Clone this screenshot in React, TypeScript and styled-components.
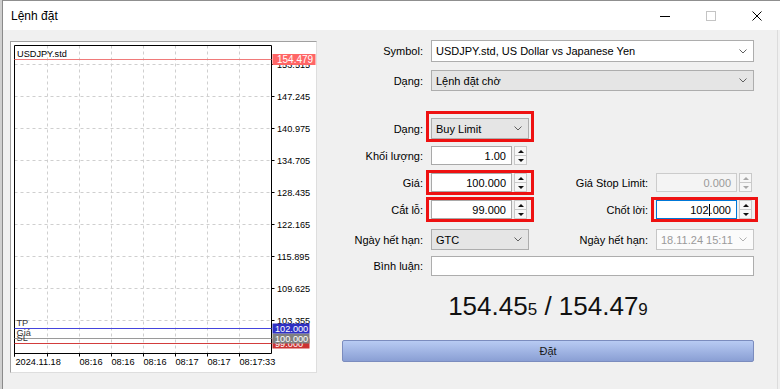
import React from 'react';
import styled, { createGlobalStyle } from 'styled-components';

const GlobalStyle = createGlobalStyle`
  html, body {
    margin: 0;
    padding: 0;
  }
  body {
    background: #cfcfcf;
    font-family: "Liberation Sans", Arial, sans-serif;
  }
`;

const Window = styled.div`
  width: 778px;
  height: 389px;
  margin-left: 2px;
  border-left: 1px solid #8a8a8a;
  box-sizing: border-box;
  display: flex;
  flex-direction: column;
  background: #f0f0f0;
  overflow: hidden;
`;

const TitleBar = styled.div`
  height: 30px;
  flex: none;
  box-sizing: border-box;
  border-top: 1px solid #8f8f8f;
  background: #fff;
  display: flex;
  align-items: center;
`;

const Title = styled.div`
  flex: 1;
  padding-left: 8px;
  font-size: 12px;
  color: #000;
`;

const CaptionButton = styled.div`
  width: 46px;
  height: 29px;
  display: flex;
  align-items: center;
  justify-content: center;
`;

const Body = styled.div`
  flex: 1;
  display: flex;
  align-items: flex-start;
  padding: 10px 0 0 7px;
  margin-right: 2px;
  border-right: 1px solid #dcdcdc;
`;

const ChartPanel = styled.div`
  margin-top: 1px;
  width: 307px;
  height: 332px;
  box-sizing: border-box;
  border: 1px solid;
  border-color: #a0a0a0 #dedede #dedede #a0a0a0;
  background: #fff;

  svg {
    display: block;
  }
`;

const Form = styled.div`
  margin-left: 25px;
  width: 412px;
  display: flex;
  flex-direction: column;
  font-size: 11px;
  color: #000;
`;

const Row = styled.div<{ $top: number; $h: number }>`
  display: grid;
  grid-template-columns: 81px 98px 1fr 98px;
  column-gap: 8px;
  height: ${p => p.$h}px;
  margin-top: ${p => p.$top}px;
`;

const Label = styled.div<{ $col?: number }>`
  grid-column: ${p => p.$col ?? 1};
  align-self: center;
  text-align: right;
  white-space: nowrap;
`;

const Cell = styled.div<{ $col: number; $span?: number }>`
  grid-column: ${p => p.$col} / span ${p => p.$span ?? 1};
  position: relative;
  display: flex;
`;

const Highlight = styled(Cell)<{ $t: number; $r: number; $b: number; $l: number }>`
  &::after {
    content: "";
    position: absolute;
    top: -${p => p.$t}px;
    right: -${p => p.$r}px;
    bottom: -${p => p.$b}px;
    left: -${p => p.$l}px;
    border: 3px solid #ee1111;
    pointer-events: none;
  }
`;

type Tone = 'white' | 'gray' | 'disabled';

const Combo = styled.div<{ $tone: Tone }>`
  flex: 1;
  display: flex;
  align-items: center;
  justify-content: space-between;
  box-sizing: border-box;
  padding: 0 6px 0 4px;
  border: 1px solid ${p => (p.$tone === 'disabled' ? '#c6c6c6' : '#adadad')};
  background: ${p => (p.$tone === 'gray' ? '#e5e5e5' : p.$tone === 'disabled' ? '#fbfbfb' : '#fff')};
  color: ${p => (p.$tone === 'disabled' ? '#9a9a9a' : '#000')};
  white-space: nowrap;
`;

const TextBox = styled.div`
  flex: 1;
  box-sizing: border-box;
  border: 1px solid #adadad;
  background: #fff;
`;

const NumberBox = styled.div<{ $state?: 'focus' | 'disabled' }>`
  width: 81px;
  box-sizing: border-box;
  display: flex;
  align-items: center;
  justify-content: flex-end;
  padding-right: 5px;
  border: 1px solid
    ${p => (p.$state === 'focus' ? '#0078d7' : p.$state === 'disabled' ? '#cccccc' : '#a9a9a9')};
  background: ${p => (p.$state === 'disabled' ? '#f4f4f4' : '#fff')};
  color: ${p => (p.$state === 'disabled' ? '#9a9a9a' : '#000')};
`;

const Caret = styled.span`
  display: inline-block;
  width: 1px;
  height: 12px;
  background: #000;
`;

const Spinner = styled.div`
  width: 13px;
  margin-left: 2px;
  box-sizing: border-box;
  display: flex;
  flex-direction: column;
  border: 1px solid #c9c9c9;
  background: #f7f7f7;
`;

const SpinHalf = styled.div`
  flex: 1;
  display: flex;
  align-items: center;
  justify-content: center;

  & + & {
    border-top: 1px solid #c9c9c9;
  }
`;

const Arrow = styled.span<{ $down?: boolean; $off?: boolean }>`
  width: 0;
  height: 0;
  border-left: 3px solid transparent;
  border-right: 3px solid transparent;
  ${p => (p.$down ? 'border-top' : 'border-bottom')}: 3px solid ${p => (p.$off ? '#a8a8a8' : '#111')};
`;

const PriceLine = styled.div`
  margin-top: 15px;
  height: 30px;
  line-height: 30px;
  text-align: center;
  font-size: 26px;
  color: #111;
  white-space: pre;
`;

const Pip = styled.span`
  font-size: 17px;
`;

const PlaceButton = styled.div`
  margin-top: 19px;
  height: 22px;
  box-sizing: border-box;
  display: flex;
  align-items: center;
  justify-content: center;
  border: 1px solid #7b8cbe;
  border-radius: 2px;
  background: linear-gradient(#b8cbf3, #8a9fd4);
  color: #1a1a1a;
  font-size: 11px;
`;

const Chevron = ({ off }: { off?: boolean }) => (
  <svg width="8" height="5" viewBox="0 0 8 5">
    <polyline points="0.5,0.5 4,4 7.5,0.5" fill="none" stroke={off ? '#b0b0b0' : '#606060'} />
  </svg>
);

const Spin = ({ off }: { off?: boolean }) => (
  <Spinner>
    <SpinHalf>
      <Arrow $off={off} />
    </SpinHalf>
    <SpinHalf>
      <Arrow $down $off={off} />
    </SpinHalf>
  </Spinner>
);

// chart geometry, svg coordinates inside the panel border
const L = 3.5;
const R = 260.5;
const T = 3.5;
const B = 311.5;
const gridY = [22.5, 54.5, 86.5, 118.5, 150.5, 182.5, 214.5, 246.5, 278.5];
const axisLabels = ['153.515', '147.245', '140.975', '134.705', '128.435', '122.165', '115.895', '109.625', '103.355'];
const gridX = [36.5, 68.5, 100.5, 132.5, 164.5, 196.5, 228.5];
const timeLabels = ['08:16', '08:16', '08:16', '08:17', '08:17', '08:17:33'];

const levels = [
  { y: 301.5, line: '#d23c3c', tag: '#cc3333', text: '99.000' },
  { y: 296.5, line: '#9a9a9a', tag: '#808080', text: '100.000' },
  { y: 286.5, line: '#4444dd', tag: '#2f2fc4', text: '102.000' },
];

const PriceChart = () => (
  <svg width="305" height="330" fontFamily="Liberation Sans, Arial, sans-serif" fontSize="9.2">
    {gridY.map(y => (
      <line key={y} x1={L} x2={R} y1={y} y2={y} stroke="#cfcfcf" strokeDasharray="3 3" />
    ))}
    {gridX.map(x => (
      <line key={x} x1={x} x2={x} y1={T} y2={B} stroke="#cfcfcf" strokeDasharray="3 3" />
    ))}
    <polyline points={`${L},${B + 3} ${L},${T} ${R},${T} ${R},${B}`} fill="none" stroke="#000" />
    <line x1={L} x2={R} y1={B} y2={B} stroke="#000" />
    {[L, ...gridX].map(x => (
      <line key={x} x1={x} x2={x} y1={B} y2={B + 3} stroke="#000" />
    ))}
    {gridY.map((y, i) => (
      <g key={y}>
        <line x1={R} x2={R + 3} y1={y} y2={y} stroke="#000" />
        <text x={266} y={y + 3.5} fill="#000">{axisLabels[i]}</text>
      </g>
    ))}
    <text x={4.5} y={323} fill="#000">2024.11.18</text>
    {timeLabels.map((t, i) => (
      <text key={i} x={gridX[i + 1]} y={323} fill="#000">{t}</text>
    ))}
    <text x={6} y={15} fill="#000">USDJPY.std</text>

    <line x1={L} x2={R} y1={17.5} y2={17.5} stroke="#f07a7a" />
    <rect x={261.5} y={12} width={43} height={11} fill="#ff6666" />
    <text x={266} y={21.2} fill="#fff" fontSize="10">154.479</text>

    {levels.map(l => (
      <line key={l.text} x1={L} x2={R} y1={l.y} y2={l.y} stroke={l.line} />
    ))}
    {levels.map(l => (
      <g key={l.text}>
        <rect x={261.5} y={l.y - 5} width={37} height={10} fill={l.tag} />
        <text x={264} y={l.y + 3.5} fill="#fff">{l.text}</text>
      </g>
    ))}
    <text x={5.5} y={284} fill="#333">TP</text>
    <text x={5.5} y={294} fill="#333">Giá</text>
    <text x={5.5} y={298.5} fill="#333">SL</text>
  </svg>
);

export default function App() {
  return (
    <>
      <GlobalStyle />
      <Window>
        <TitleBar>
          <Title>Lệnh đặt</Title>
          <CaptionButton>
            <svg width="10" height="10" viewBox="0 0 10 10">
              <line x1="0" x2="10" y1="5.5" y2="5.5" stroke="#000" />
            </svg>
          </CaptionButton>
          <CaptionButton>
            <svg width="10" height="10" viewBox="0 0 10 10">
              <rect x="0.5" y="0.5" width="9" height="9" fill="none" stroke="#c4c4c4" />
            </svg>
          </CaptionButton>
          <CaptionButton>
            <svg width="10" height="10" viewBox="0 0 10 10">
              <path d="M0.5 0.5 L9.5 9.5 M9.5 0.5 L0.5 9.5" stroke="#000" />
            </svg>
          </CaptionButton>
        </TitleBar>
        <Body>
          <ChartPanel>
            <PriceChart />
          </ChartPanel>
          <Form>
            <Row $top={0} $h={22}>
              <Label>Symbol:</Label>
              <Cell $col={2} $span={3}>
                <Combo $tone="white">
                  USDJPY.std, US Dollar vs Japanese Yen
                  <Chevron />
                </Combo>
              </Cell>
            </Row>
            <Row $top={8} $h={21}>
              <Label>Dạng:</Label>
              <Cell $col={2} $span={3}>
                <Combo $tone="gray">
                  Lệnh đặt chờ
                  <Chevron />
                </Combo>
              </Cell>
            </Row>
            <Row $top={27} $h={21}>
              <Label>Dạng:</Label>
              <Highlight $col={2} $t={7} $r={5} $b={3} $l={5}>
                <Combo $tone="gray">
                  Buy Limit
                  <Chevron />
                </Combo>
              </Highlight>
            </Row>
            <Row $top={7} $h={19}>
              <Label>Khối lượng:</Label>
              <Cell $col={2}>
                <NumberBox>1.00</NumberBox>
                <Spin />
              </Cell>
            </Row>
            <Row $top={8} $h={19}>
              <Label>Giá:</Label>
              <Highlight $col={2} $t={3} $r={5} $b={3} $l={5}>
                <NumberBox>100.000</NumberBox>
                <Spin />
              </Highlight>
              <Label $col={3}>Giá Stop Limit:</Label>
              <Cell $col={4}>
                <NumberBox $state="disabled">0.000</NumberBox>
                <Spin off />
              </Cell>
            </Row>
            <Row $top={8} $h={19}>
              <Label>Cắt lỗ:</Label>
              <Highlight $col={2} $t={3} $r={5} $b={3} $l={5}>
                <NumberBox>99.000</NumberBox>
                <Spin />
              </Highlight>
              <Label $col={3}>Chốt lời:</Label>
              <Highlight $col={4} $t={3} $r={4} $b={3} $l={5}>
                <NumberBox $state="focus">
                  102<Caret />.000
                </NumberBox>
                <Spin />
              </Highlight>
            </Row>
            <Row $top={10} $h={21}>
              <Label>Ngày hết hạn:</Label>
              <Cell $col={2}>
                <Combo $tone="gray">
                  GTC
                  <Chevron />
                </Combo>
              </Cell>
              <Label $col={3}>Ngày hết hạn:</Label>
              <Cell $col={4}>
                <Combo $tone="disabled">
                  18.11.24 15:11
                  <Chevron off />
                </Combo>
              </Cell>
            </Row>
            <Row $top={6} $h={20}>
              <Label>Bình luận:</Label>
              <Cell $col={2} $span={3}>
                <TextBox />
              </Cell>
            </Row>
            <PriceLine>
              154.45<Pip>5</Pip> / 154.47<Pip>9</Pip>
            </PriceLine>
            <PlaceButton>Đặt</PlaceButton>
          </Form>
        </Body>
      </Window>
    </>
  );
}
